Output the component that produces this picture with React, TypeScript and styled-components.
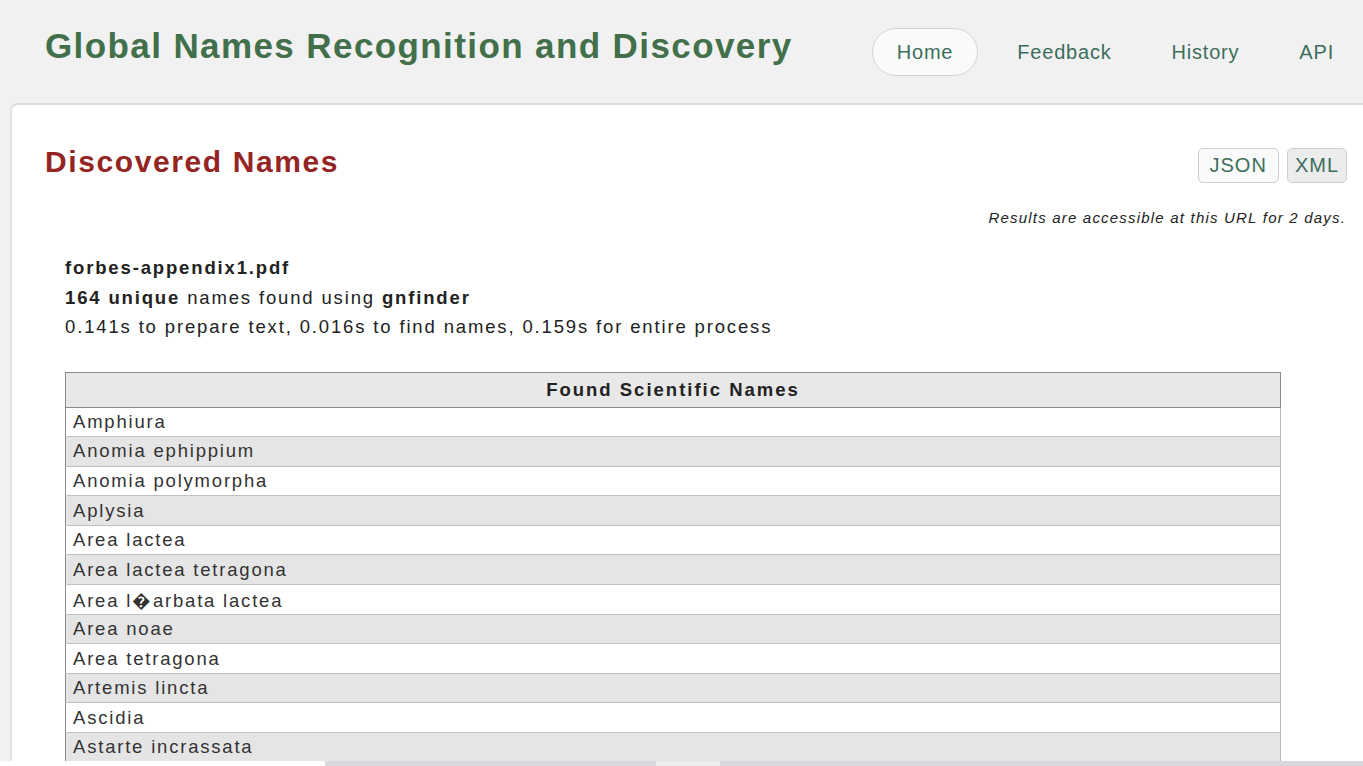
import React from "react";
import styled, { createGlobalStyle } from "styled-components";

const GlobalStyle = createGlobalStyle`
  html, body {
    margin: 0;
    padding: 0;
    background: #f1f1f1;
    font-family: "Liberation Sans", Arial, sans-serif;
    overflow: hidden;
  }
`;

const Page = styled.div`
  width: 1363px;
  height: 766px;
  overflow: hidden;
  position: relative;
`;

const Header = styled.header`
  height: 103px;
  display: flex;
  align-items: flex-start;
  justify-content: space-between;
  padding: 0 0 0 45px;
  box-sizing: border-box;
`;

const SiteTitle = styled.h1`
  margin: 26px 0 0 0;
  font-size: 35px;
  font-weight: bold;
  color: #41704a;
  letter-spacing: 1.4px;
`;

const Nav = styled.nav`
  display: flex;
  align-items: center;
  margin-top: 28px;
  margin-right: 28px;
`;

const NavItem = styled.a<{ $active?: boolean; $last?: boolean }>`
  display: flex;
  align-items: center;
  height: 48px;
  box-sizing: border-box;
  padding: 0 ${p => (p.$active ? "24px" : "0")};
  margin-left: ${p => (p.$active ? "0" : "38px")};
  margin-right: ${p => (p.$active || p.$last ? "0" : "20px")};
  border-radius: 24px;
  border: ${p => (p.$active ? "1px solid #d4d4d4" : "1px solid transparent")};
  background: ${p => (p.$active ? "#fafafa" : "transparent")};
  color: #3c6e5c;
  font-size: 20px;
  letter-spacing: 0.8px;
  text-decoration: none;
`;

const Card = styled.main`
  margin-left: 10px;
  background: #fff;
  border-top: 2px solid #dcdcdc;
  border-left: 2px solid #e2e2e2;
  border-top-left-radius: 8px;
  height: 663px;
  box-sizing: border-box;
  padding: 0 16px 0 33px;
`;

const TitleRow = styled.div`
  display: flex;
  justify-content: space-between;
  align-items: flex-start;
  padding-top: 40px;
`;

const PageTitle = styled.h2`
  margin: 0;
  font-size: 30px;
  font-weight: bold;
  color: #952523;
  letter-spacing: 1.6px;
`;

const Buttons = styled.div`
  display: flex;
  gap: 8px;
  margin-top: 3px;
`;

const FormatButton = styled.button<{ $pressed?: boolean; $pad: number }>`
  height: 35px;
  padding: 0 ${p => p.$pad}px;
  border: 1px solid #cfcfcf;
  border-radius: 5px;
  background: ${p => (p.$pressed ? "#ececec" : "#fafafa")};
  color: #3c6e5c;
  font-family: "Liberation Sans", Arial, sans-serif;
  font-size: 20px;
  letter-spacing: 1px;
`;

const Note = styled.p`
  margin: 26px 1px 0 0;
  text-align: right;
  font-style: italic;
  font-size: 15px;
  letter-spacing: 1.2px;
  color: #222;
`;

const Info = styled.div`
  margin: 27px 0 0 20px;
  font-size: 18.5px;
  line-height: 29.5px;
  letter-spacing: 1.85px;
  color: #222;
`;

const Table = styled.table`
  margin: 30px 0 0 20px;
  width: 1216px;
  border-collapse: collapse;
  font-size: 18.5px;
  letter-spacing: 1.8px;
  color: #333;
`;

const HeadCell = styled.th`
  height: 34px;
  padding: 0;
  background: #e8e8e8;
  border: 1px solid #8a8a8a;
  font-weight: bold;
  letter-spacing: 2px;
  color: #222;
`;

const Row = styled.tr<{ $shaded: boolean }>`
  background: ${p => (p.$shaded ? "#e5e5e5" : "#fff")};
`;

const Cell = styled.td`
  height: 28.6px;
  padding: 0 7px;
  border: 1px solid #c0c0c0;
  border-left-color: #8a8a8a;
  border-right-color: #b8b8b8;
`;

const BottomBar = styled.div`
  position: absolute;
  left: 0;
  right: 0;
  bottom: 0;
  height: 5px;
  display: flex;
`;

const BarSegment = styled.div<{ $tone: "white" | "track" | "thumb"; $width?: number }>`
  ${p => (p.$width ? `width: ${p.$width}px;` : "flex: 1;")}
  background: ${p => (p.$tone === "white" ? "#fff" : p.$tone === "thumb" ? "#ececef" : "#d8d8df")};
`;

const names = [
  "Amphiura",
  "Anomia ephippium",
  "Anomia polymorpha",
  "Aplysia",
  "Area lactea",
  "Area lactea tetragona",
  "Area l\uFFFDarbata lactea",
  "Area noae",
  "Area tetragona",
  "Artemis lincta",
  "Ascidia",
  "Astarte incrassata",
];

export default function App() {
  return (
    <Page>
      <GlobalStyle />
      <Header>
        <SiteTitle>Global Names Recognition and Discovery</SiteTitle>
        <Nav>
          <NavItem $active href="#">Home</NavItem>
          <NavItem href="#">Feedback</NavItem>
          <NavItem href="#">History</NavItem>
          <NavItem $last href="#">API</NavItem>
        </Nav>
      </Header>
      <Card>
        <TitleRow>
          <PageTitle>Discovered Names</PageTitle>
          <Buttons>
            <FormatButton $pad={11}>JSON</FormatButton>
            <FormatButton $pad={7} $pressed>XML</FormatButton>
          </Buttons>
        </TitleRow>
        <Note>Results are accessible at this URL for 2 days.</Note>
        <Info>
          <b>forbes-appendix1.pdf</b>
          <br />
          <b>164 unique</b> names found using <b>gnfinder</b>
          <br />
          0.141s to prepare text, 0.016s to find names, 0.159s for entire process
        </Info>
        <Table>
          <thead>
            <tr>
              <HeadCell>Found Scientific Names</HeadCell>
            </tr>
          </thead>
          <tbody>
            {names.map((n, i) => (
              <Row key={n} $shaded={i % 2 === 1}>
                <Cell>{n}</Cell>
              </Row>
            ))}
          </tbody>
        </Table>
      </Card>
      <BottomBar>
        <BarSegment $tone="white" $width={325} />
        <BarSegment $tone="track" $width={331} />
        <BarSegment $tone="thumb" $width={64} />
        <BarSegment $tone="track" />
      </BottomBar>
    </Page>
  );
}
